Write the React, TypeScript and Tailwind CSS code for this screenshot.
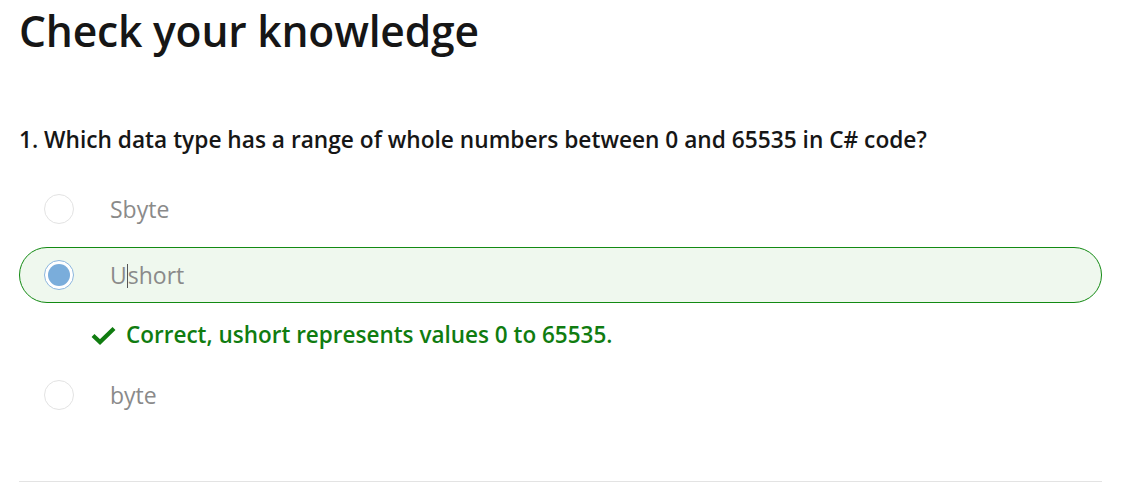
const options = [
  { label: "Sbyte", selected: false },
  { label: "Ushort", selected: true },
  { label: "byte", selected: false },
];

function Radio({ selected }: { selected: boolean }) {
  if (selected) {
    return (
      <span className="flex h-[30px] w-[30px] shrink-0 items-center justify-center rounded-full border-[1.5px] border-[#8cb6de] bg-white">
        <span className="h-[22px] w-[22px] rounded-full bg-[#7aaddb]" />
      </span>
    );
  }
  return <span className="h-[30px] w-[30px] shrink-0 rounded-full border border-[#e3e3e3] bg-white" />;
}

export default function App() {
  return (
    <main
      className="min-h-screen bg-white pl-[19px] pr-[21px] text-[#161616]"
      style={{ fontFamily: '"Segoe UI", "Open Sans", "Noto Sans", sans-serif' }}
    >
      <h1 className="pt-[4px] text-[42.6px] font-semibold leading-[52px] tracking-[-0.2px]">Check your knowledge</h1>

      <p className="mt-[69px] text-[22.7px] font-semibold leading-[30px]">
        1. Which data type has a range of whole numbers between 0 and 65535 in C# code?
      </p>

      <div className="mt-[26px] flex flex-col">
        {options.map((o, i) => (
          <div key={o.label} className={i === 1 ? "mt-[10px]" : ""}>
            <div
              className={
                "flex h-[56px] items-center rounded-full border pl-[24px] " +
                (o.selected ? "border-[#138a13] bg-[#eff8ee]" : "border-transparent")
              }
            >
              <Radio selected={o.selected} />
              <span className="ml-[36px] text-[23px] text-[#8a8a8a]">
                {o.selected ? (
                  <>
                    U<span className="inline-block h-[24px] w-px translate-y-[4px] bg-[#555]" />short
                  </>
                ) : (
                  o.label
                )}
              </span>
            </div>
            {o.selected && (
              <div className="flex h-[64px] items-center pl-[72px]">
                <svg width="25" height="19" viewBox="0 0 25 19" className="shrink-0">
                  <polyline points="2,9.5 9,16 23,2.5" fill="none" stroke="#107c10" strokeWidth="4.2" />
                </svg>
                <span className="ml-[10px] text-[22.5px] font-semibold text-[#107c10]">
                  Correct, ushort represents values 0 to 65535.
                </span>
              </div>
            )}
          </div>
        ))}
      </div>

      <div className="mt-[58px] h-px bg-[#e3e3e3]" />
    </main>
  );
}
